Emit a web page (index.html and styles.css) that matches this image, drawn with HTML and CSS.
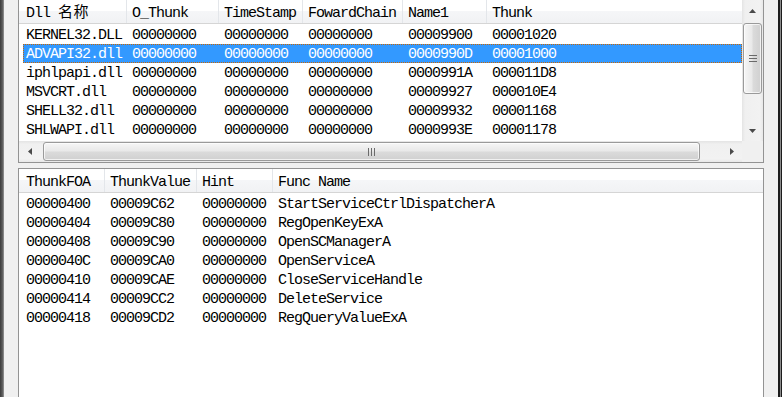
FILE: index.html
```html
<!DOCTYPE html>
<html lang="zh">
<head>
    <meta charset="UTF-8">
    <meta name="viewport" content="width=device-width, initial-scale=1.0">
    <title>导入表</title>
    <link rel="stylesheet" href="styles.css">
</head>
<body>
    <div class="window">
        <div class="edge-left"></div>
        <div class="client">
            <!-- dll list -->
            <div class="panel panel-dll">
                <div class="list-area">
                    <div class="list">
                        <div class="header">
                            <div class="hcell d1">Dll <span class="cjk">名称</span></div>
                            <div class="hcell d2">O_Thunk</div>
                            <div class="hcell d3">TimeStamp</div>
                            <div class="hcell d4">FowardChain</div>
                            <div class="hcell d5">Name1</div>
                            <div class="hcell d6">Thunk</div>
                        </div>
                        <div class="rows">
                            <div class="row">
                                <div class="cell d1">KERNEL32.DLL</div><div class="cell d2">00000000</div><div class="cell d3">00000000</div><div class="cell d4">00000000</div><div class="cell d5">00009900</div><div class="cell d6">00001020</div>
                            </div>
                            <div class="row selected">
                                <div class="cell d1">ADVAPI32.dll</div><div class="cell d2">00000000</div><div class="cell d3">00000000</div><div class="cell d4">00000000</div><div class="cell d5">0000990D</div><div class="cell d6">00001000</div>
                            </div>
                            <div class="row">
                                <div class="cell d1">iphlpapi.dll</div><div class="cell d2">00000000</div><div class="cell d3">00000000</div><div class="cell d4">00000000</div><div class="cell d5">0000991A</div><div class="cell d6">000011D8</div>
                            </div>
                            <div class="row">
                                <div class="cell d1">MSVCRT.dll</div><div class="cell d2">00000000</div><div class="cell d3">00000000</div><div class="cell d4">00000000</div><div class="cell d5">00009927</div><div class="cell d6">000010E4</div>
                            </div>
                            <div class="row">
                                <div class="cell d1">SHELL32.dll</div><div class="cell d2">00000000</div><div class="cell d3">00000000</div><div class="cell d4">00000000</div><div class="cell d5">00009932</div><div class="cell d6">00001168</div>
                            </div>
                            <div class="row">
                                <div class="cell d1">SHLWAPI.dll</div><div class="cell d2">00000000</div><div class="cell d3">00000000</div><div class="cell d4">00000000</div><div class="cell d5">0000993E</div><div class="cell d6">00001178</div>
                            </div>
                        </div>
                    </div>
                    <div class="vscroll">
                        <div class="sbtn">
                            <svg width="7" height="4" viewBox="0 0 7 4"><polygon points="0,4 3.5,0 7,4" fill="#4a4a4a"/></svg>
                        </div>
                        <div class="vtrack">
                            <div class="vthumb">
                                <svg width="8" height="7" viewBox="0 0 8 7">
                                    <rect x="0" y="0" width="8" height="1" fill="#6a6a6a"/>
                                    <rect x="0" y="3" width="8" height="1" fill="#6a6a6a"/>
                                    <rect x="0" y="6" width="8" height="1" fill="#6a6a6a"/>
                                </svg>
                            </div>
                        </div>
                        <div class="sbtn">
                            <svg width="7" height="4" viewBox="0 0 7 4"><polygon points="0,0 7,0 3.5,4" fill="#4a4a4a"/></svg>
                        </div>
                    </div>
                </div>
                <div class="hscroll">
                    <div class="sbtn">
                        <svg width="4" height="7" viewBox="0 0 4 7"><polygon points="4,0 4,7 0,3.5" fill="#4a4a4a"/></svg>
                    </div>
                    <div class="htrack">
                        <div class="hthumb">
                            <svg width="7" height="8" viewBox="0 0 7 8">
                                <rect x="0" y="0" width="1" height="8" fill="#6a6a6a"/>
                                <rect x="3" y="0" width="1" height="8" fill="#6a6a6a"/>
                                <rect x="6" y="0" width="1" height="8" fill="#6a6a6a"/>
                            </svg>
                        </div>
                    </div>
                    <div class="sbtn">
                        <svg width="4" height="7" viewBox="0 0 4 7"><polygon points="0,0 4,3.5 0,7" fill="#4a4a4a"/></svg>
                    </div>
                    <div class="corner"></div>
                </div>
            </div>

            <!-- thunk list -->
            <div class="panel panel-func">
                <div class="header">
                    <div class="hcell f1">ThunkFOA</div>
                    <div class="hcell f2">ThunkValue</div>
                    <div class="hcell f3">Hint</div>
                    <div class="hcell f4">Func Name</div>
                </div>
                <div class="rows">
                    <div class="row"><div class="cell f1">00000400</div><div class="cell f2">00009C62</div><div class="cell f3">00000000</div><div class="cell f4">StartServiceCtrlDispatcherA</div></div>
                    <div class="row"><div class="cell f1">00000404</div><div class="cell f2">00009C80</div><div class="cell f3">00000000</div><div class="cell f4">RegOpenKeyExA</div></div>
                    <div class="row"><div class="cell f1">00000408</div><div class="cell f2">00009C90</div><div class="cell f3">00000000</div><div class="cell f4">OpenSCManagerA</div></div>
                    <div class="row"><div class="cell f1">0000040C</div><div class="cell f2">00009CA0</div><div class="cell f3">00000000</div><div class="cell f4">OpenServiceA</div></div>
                    <div class="row"><div class="cell f1">00000410</div><div class="cell f2">00009CAE</div><div class="cell f3">00000000</div><div class="cell f4">CloseServiceHandle</div></div>
                    <div class="row"><div class="cell f1">00000414</div><div class="cell f2">00009CC2</div><div class="cell f3">00000000</div><div class="cell f4">DeleteService</div></div>
                    <div class="row"><div class="cell f1">00000418</div><div class="cell f2">00009CD2</div><div class="cell f3">00000000</div><div class="cell f4">RegQueryValueExA</div></div>
                </div>
            </div>
        </div>
        <div class="edge-right"></div>
    </div>
</body>
</html>
```

FILE: styles.css
```css
body {
    margin: 0;
    overflow: hidden;
    font-family: "Liberation Mono", "Noto Sans CJK SC", monospace;
    font-size: 15px;
    letter-spacing: -1px;
    color: #000;
}
.window {
    display: flex;
    height: 440px;
    background-color: #f0f0f0;
}
.edge-left {
    width: 4px;
    flex-shrink: 0;
    background: linear-gradient(to right, #3c3c3c, #5c5c5c 60%, #9a9a9a);
}
.edge-right {
    width: 4px;
    flex-shrink: 0;
    background: linear-gradient(to right, #1c1c1c 0 2px, #8c8c8c 2px 3px, #1c1c1c 3px);
}
.client {
    flex: 1;
    min-width: 0;
    display: flex;
    flex-direction: column;
    gap: 5px;
    padding: 0 14px;
    margin-top: -1px;
}
.panel {
    border: 1px solid #939393;
    background-color: #fff;
    overflow: hidden;
}
.panel-dll {
    height: 164px;
    box-sizing: border-box;
    display: flex;
    flex-direction: column;
    flex-shrink: 0;
}
.panel-func {
    height: 260px;
    flex-shrink: 0;
}
.list-area {
    display: flex;
    height: 141px;
}
.list {
    flex: 1;
    min-width: 0;
    overflow: hidden;
}

/* header */
.header {
    display: flex;
    height: 24px;
    box-sizing: border-box;
    border-bottom: 1px solid #d5d5d5;
    background: linear-gradient(#fff 0, #fff 50%, #f5f6f8 50%, #f1f2f4 100%);
    white-space: nowrap;
}
.hcell {
    box-sizing: border-box;
    padding: 4px 0 0 5px;
    line-height: 20px;
    border-right: 1px solid #e3e6ea;
    flex-shrink: 0;
}
.cjk {
    font-size: 15px;
    letter-spacing: 0.5px;
}

/* rows */
.rows {
    padding-top: 1px;
}
.row {
    display: flex;
    height: 19px;
    line-height: 22px;
    margin-left: 4px;
    white-space: nowrap;
}
.cell {
    box-sizing: border-box;
    padding-left: 5px;
    flex-shrink: 0;
}
.row.selected {
    background-color: #3399ff;
    color: #fff;
    outline: 1px dotted #cc6600;
    outline-offset: -1px;
}

/* dll columns */
.hcell.d1 { width: 108px; padding-left: 7px; }
.cell.d1 { width: 104px; padding-left: 3px; }
.d2 { width: 92px; }
.d3 { width: 84px; }
.d4 { width: 100px; }
.d5 { width: 84px; }
.d6 { width: 260px; }
.cell.d6 { flex: 1; }

/* thunk columns */
.hcell.f1 { width: 86px; padding-left: 7px; }
.cell.f1 { width: 82px; padding-left: 3px; }
.f2 { width: 92px; }
.f3 { width: 76px; }
.f4 { width: 520px; }

/* scrollbars */
.vscroll {
    width: 21px;
    flex-shrink: 0;
    display: flex;
    flex-direction: column;
    background: linear-gradient(to right, #e4e4e4, #f0f0f0 15%, #f2f2f2 85%, #e8e8e8);
}
.sbtn {
    width: 21px;
    height: 21px;
    display: flex;
    align-items: center;
    justify-content: center;
    flex-shrink: 0;
}
.vtrack {
    flex: 1;
    padding: 2px 1px 0;
}
.vthumb {
    height: 71px;
    box-sizing: border-box;
    border: 1px solid #9a9a9a;
    border-radius: 3px;
    background: linear-gradient(to right, #f6f6f6, #e9e9e9 45%, #dadada 55%, #d0d0d0);
    box-shadow: inset 0 0 0 1px rgba(255, 255, 255, 0.7);
    display: flex;
    align-items: center;
    justify-content: center;
}
.hscroll {
    display: flex;
    height: 21px;
    background: linear-gradient(#e4e4e4, #f0f0f0 15%, #f2f2f2 85%, #e8e8e8);
}
.htrack {
    flex: 1;
    min-width: 0;
    padding: 1px 0 0 3px;
}
.hthumb {
    width: 657px;
    height: 19px;
    box-sizing: border-box;
    border: 1px solid #9a9a9a;
    border-radius: 3px;
    background: linear-gradient(#f6f6f6, #e9e9e9 45%, #dadada 55%, #d0d0d0);
    box-shadow: inset 0 0 0 1px rgba(255, 255, 255, 0.7);
    display: flex;
    align-items: center;
    justify-content: center;
}
.corner {
    width: 21px;
    flex-shrink: 0;
    background-color: #f0f0f0;
}
```
